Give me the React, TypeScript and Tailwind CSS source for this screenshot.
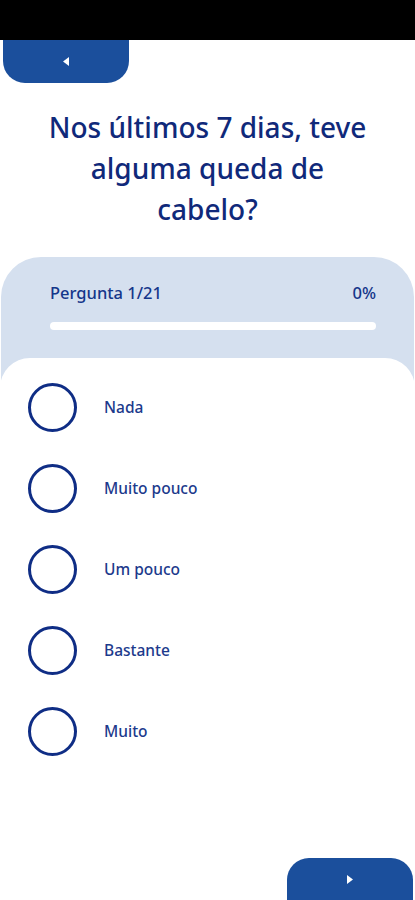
import { useState } from 'react';

const options = ['Nada', 'Muito pouco', 'Um pouco', 'Bastante', 'Muito'];

export default function App() {
  const [selected, setSelected] = useState<number | null>(null);

  return (
    <div className="w-[415px] h-[900px] bg-white overflow-hidden flex flex-col" style={{ fontFamily: '"Noto Sans", Lato, sans-serif' }}>
      {/* status bar */}
      <div className="h-[40px] bg-black shrink-0" />

      {/* back button */}
      <div className="flex">
        <button className="ml-[3px] w-[126px] h-[43px] bg-[#1b4f9c] rounded-b-[22px] flex items-center justify-center">
          <svg width="6" height="9" viewBox="0 0 6 9">
            <path d="M6 0 L0 4.5 L6 9 Z" fill="white" />
          </svg>
        </button>
      </div>

      {/* question */}
      <h1 className="mt-[24px] text-center text-[28px] leading-[41px] font-medium text-[#10297a]">
        Nos últimos 7 dias, teve<br />alguma queda de<br />cabelo?
      </h1>

      {/* progress panel */}
      <div className="mt-[27px] mx-[1px] bg-[#d5e0ef] rounded-t-[40px] flex-1 flex flex-col">
        <div className="pl-[49px] pr-[38px] pt-[24px] flex justify-between text-[16.5px] font-medium text-[#14368a]">
          <span>Pergunta 1/21</span>
          <span>0%</span>
        </div>
        <div className="ml-[49px] mr-[38px] mt-[16px] h-[8px] bg-white rounded-full" />

        {/* options card */}
        <div className="mt-[28px] -mx-[1px] bg-white rounded-t-[30px] flex-1 flex flex-col pt-[25px]">
          <div className="flex flex-col gap-[32px]">
            {options.map((o, i) => (
              <button
                key={o}
                onClick={() => setSelected(i)}
                className="flex items-center pl-[28px] text-left"
              >
                <span className="w-[49px] h-[49px] rounded-full border-[3px] border-[#0f2d85] flex items-center justify-center shrink-0">
                  {selected === i && <span className="w-[27px] h-[27px] rounded-full bg-[#0f2d85]" />}
                </span>
                <span className="ml-[27px] text-[15.5px] font-medium text-[#1c3a8c]">{o}</span>
              </button>
            ))}
          </div>

          {/* next button */}
          <div className="mt-auto flex justify-end">
            <button className="mr-[2px] w-[126px] h-[42px] bg-[#1b4f9c] rounded-t-[22px] flex items-center justify-center">
              <svg width="6" height="9" viewBox="0 0 6 9">
                <path d="M0 0 L6 4.5 L0 9 Z" fill="white" />
              </svg>
            </button>
          </div>
        </div>
      </div>
    </div>
  );
}
